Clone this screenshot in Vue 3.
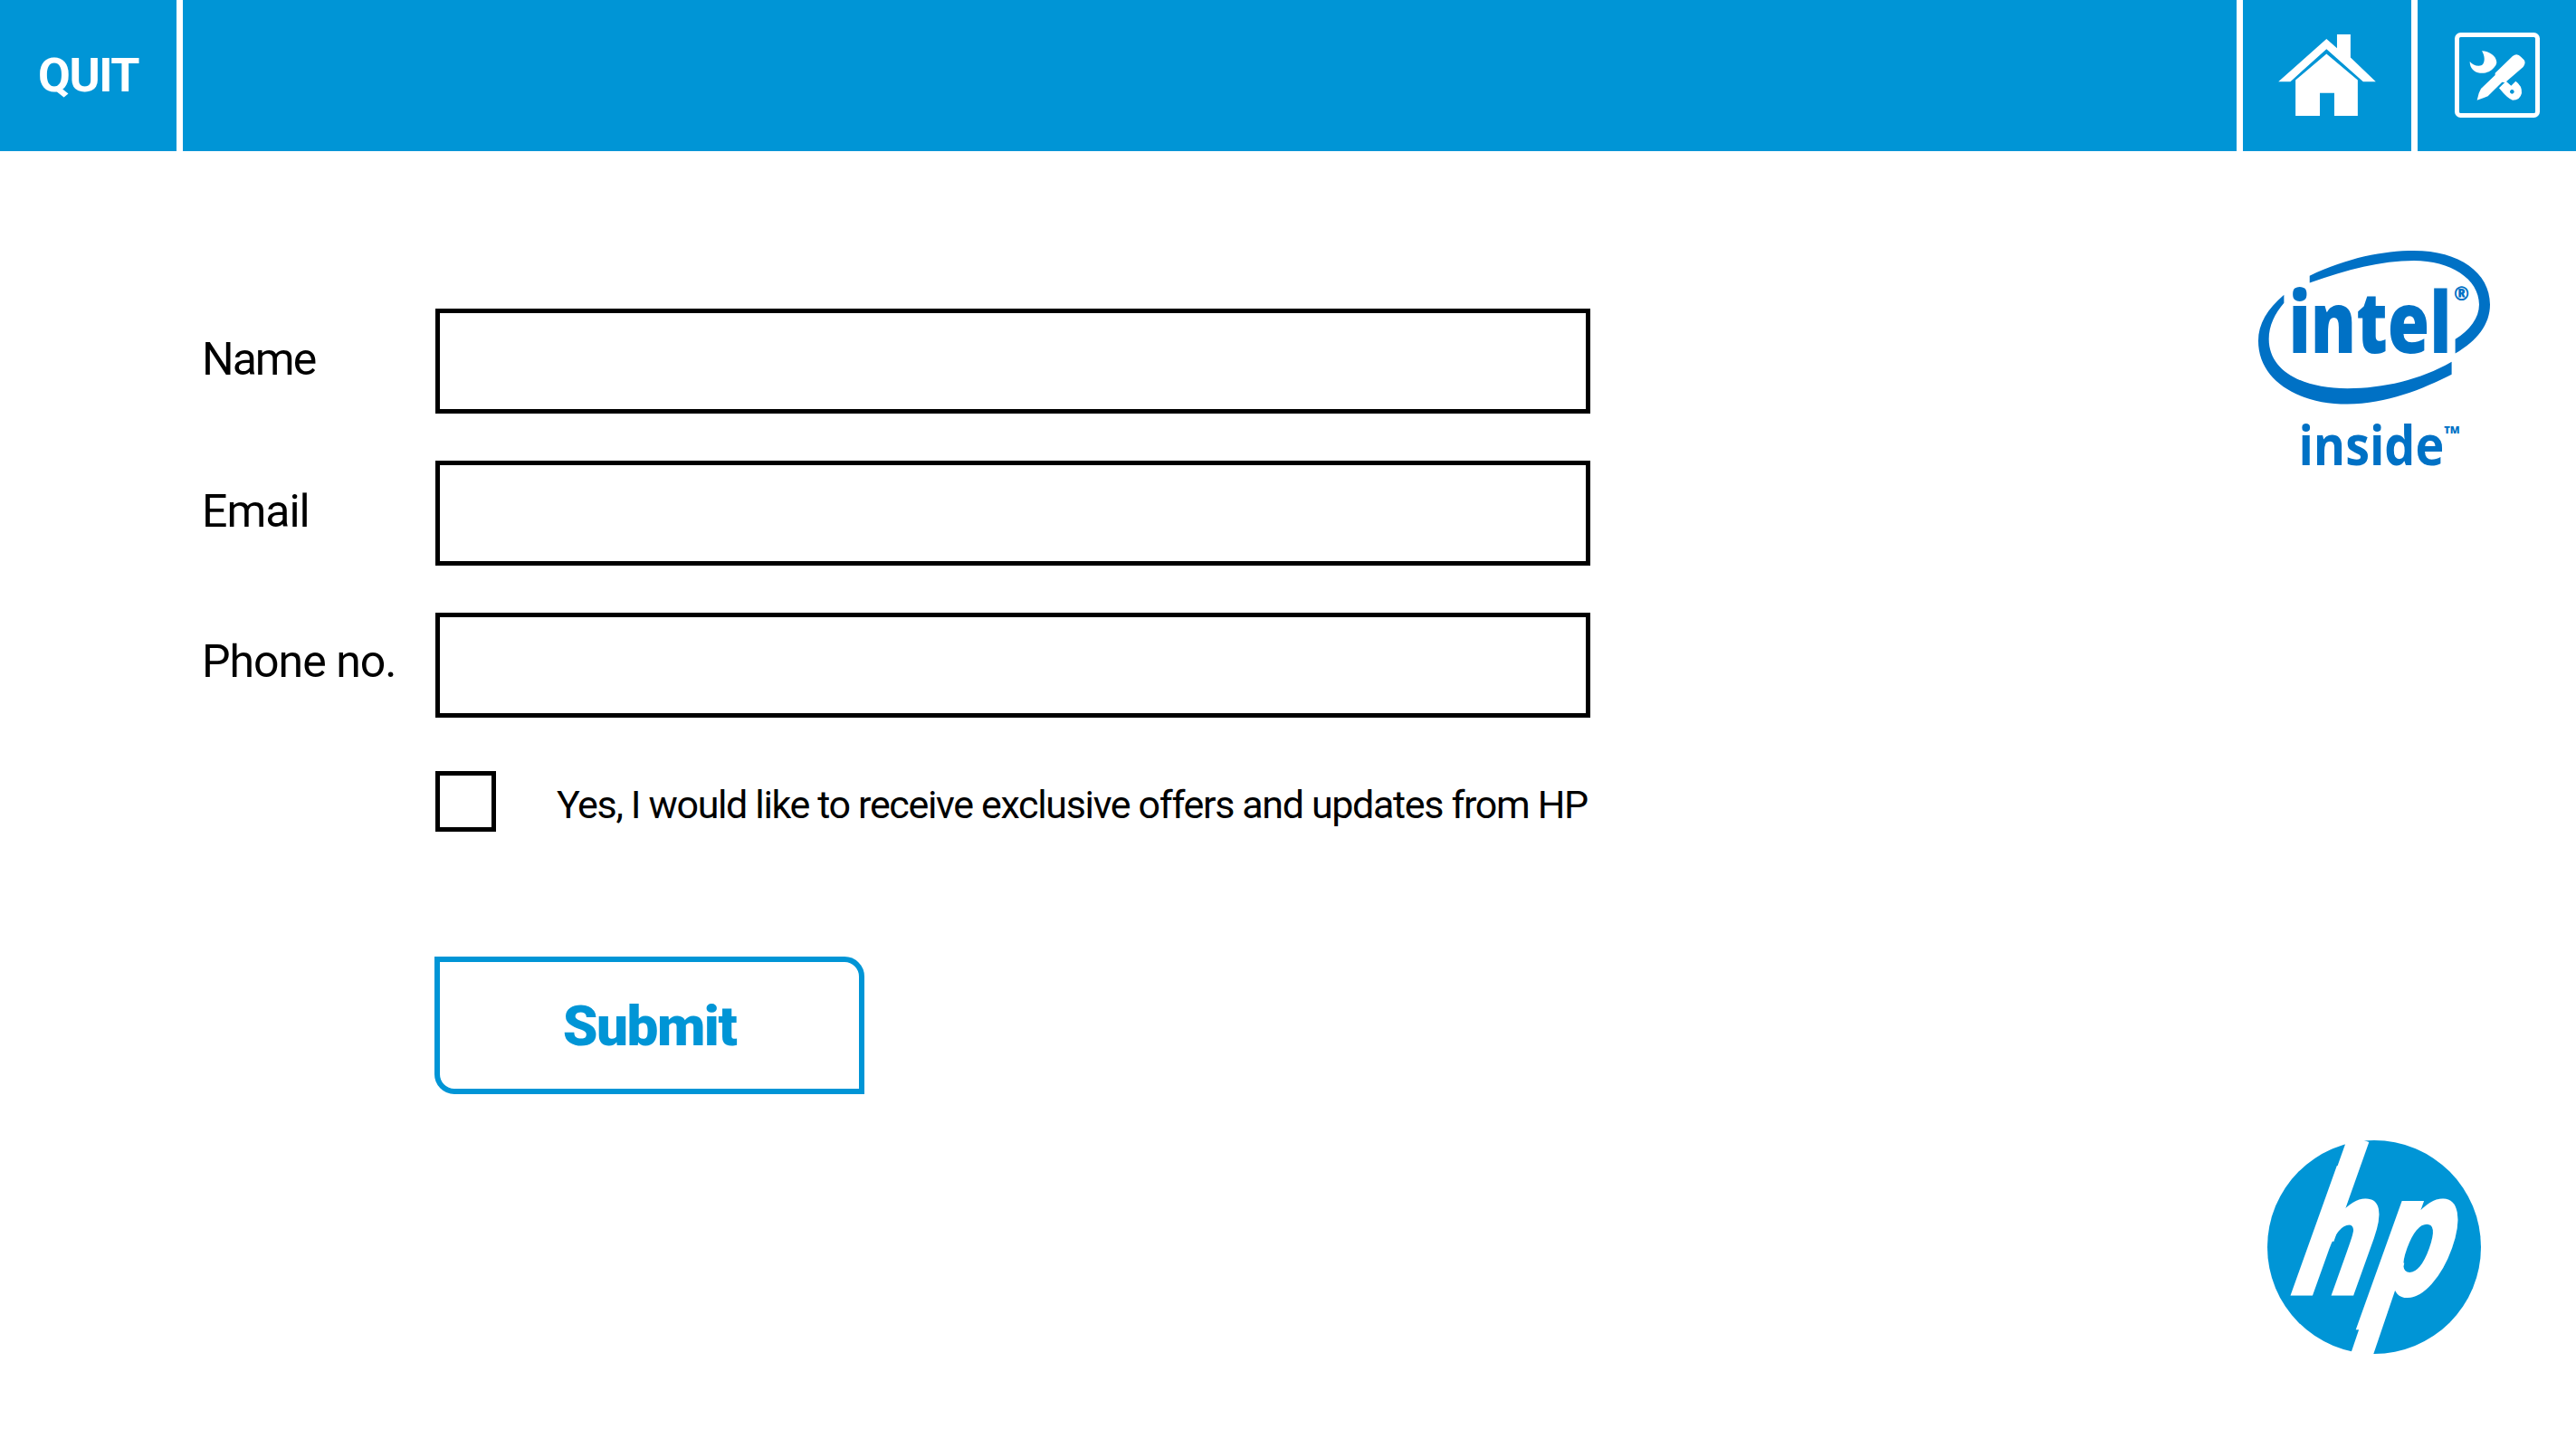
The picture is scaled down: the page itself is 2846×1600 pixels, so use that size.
<template>
  <div class="screen">
    <header class="topbar">
      <button class="cell quit">QUIT</button>
      <div class="cell spacer"></div>
      <button class="cell home" aria-label="Home">
        <svg width="108" height="90" viewBox="228 113 324 271" fill="#fff">
          <path d="M388 128 L423 159 L423 113 L468 113 L468 190 L552 270 L510 270 L388 162 L268 270 L228 270 Z" />
          <path d="M388 178 L492 265 L492 384 L414 384 L414 308 L366 308 L366 384 L285 384 L285 265 Z" />
        </svg>
      </button>
      <button class="cell tools" aria-label="Tools">
        <svg width="94" height="94" viewBox="0 0 94 94">
          <rect x="2.5" y="2.5" width="89" height="89" rx="4" fill="none" stroke="#fff" stroke-width="5" />
          <g fill="#fff" transform="translate(14 12) scale(0.3333)">
            <path d="M48 25 C72 25 96 42 97 62 C97 70 92 76 88 80 C78 92 62 100 42 98 C22 96 8 82 8 60 C18 72 35 78 48 72 C60 64 58 40 48 25 Z" />
            <path d="M150 42 Q165 30 178 45 L188 55 Q195 65 185 78 L125 130 L115 128 L68 175 L55 180 L32 188 L38 165 L45 150 L92 105 L92 98 Z" />
            <path fill-rule="evenodd" d="M105 148 L128 125 L145 140 L160 125 Q182 140 180 165 Q175 188 150 188 Q135 185 105 148 Z M148 153 a7 7 0 1 0 0.1 0 Z" />
          </g>
        </svg>
      </button>
    </header>

    <main class="content">
      <form class="signup" @submit.prevent>
        <div class="fields">
          <template v-for="field in fields" :key="field.id">
            <label class="field-label" :class="field.id" :for="field.id">{{ field.label }}</label>
            <input :id="field.id" v-model="field.value" class="field-input" type="text" />
          </template>
        </div>

        <div class="consent">
          <input id="offers" v-model="offers" class="checkbox" type="checkbox" />
          <label for="offers">Yes, I would like to receive exclusive offers and updates from HP</label>
        </div>

        <button class="submit" type="submit">Submit</button>
      </form>

      <aside class="logos">
        <svg class="intel" width="256" height="238" viewBox="105 52 767 713">
          <g fill="#0071c5">
            <path d="M275 135 C400 75 520 52 620 52 C770 52 872 125 872 230 C872 295 830 350 757 392 L757 345 C805 315 836 275 836 230 C836 145 740 85 620 85 C510 85 400 115 275 158 Z" />
            <path d="M190 198 C135 245 105 295 105 350 C105 480 235 560 400 560 C530 560 650 510 745 462 L745 420 C640 480 520 508 400 508 C250 508 140 450 140 345 C140 300 160 260 190 225 Z" />
            <text x="205" y="390" font-size="283" textLength="540" lengthAdjust="spacingAndGlyphs">intel</text>
            <text x="752" y="216" font-size="62">®</text>
            <text class="inside" x="238" y="762" font-size="182" textLength="482" lengthAdjust="spacingAndGlyphs">inside</text>
            <text x="720" y="656" font-size="32" textLength="52" lengthAdjust="spacingAndGlyphs">TM</text>
          </g>
        </svg>

        <svg class="hp" width="236" height="236" viewBox="0 0 236 236">
          <circle cx="118" cy="118" r="118" fill="#0095d6" />
          <g stroke="#fff" stroke-width="24">
            <line x1="101" y1="-2" x2="62" y2="108" />
            <line x1="104" y1="238" x2="140" y2="132" />
          </g>
          <text transform="translate(0 169) skewX(-19.7)" x="18" font-size="182" fill="#fff" stroke="#fff" stroke-width="5" textLength="172" lengthAdjust="spacingAndGlyphs">hp</text>
        </svg>
      </aside>
    </main>
  </div>
</template>

<script setup>
import { ref } from "vue";

const fields = ref([
  { id: "name", label: "Name", value: "" },
  { id: "email", label: "Email", value: "" },
  { id: "phone", label: "Phone no.", value: "" },
]);

const offers = ref(false);
</script>

<style>
html,
body {
  margin: 0;
  background: #fff;
}
</style>

<style scoped>
.screen {
  width: 2846px;
  height: 1600px;
  display: flex;
  flex-direction: column;
  font-family: "Roboto", "Liberation Sans", sans-serif;
  color: #000;
  overflow: hidden;
}

.topbar {
  height: 167px;
  display: flex;
  gap: 7px;
  flex-shrink: 0;
}

.cell {
  background: #0095d6;
  border: none;
  padding: 0 0 1px;
  display: flex;
  align-items: center;
  justify-content: center;
}

.quit {
  width: 195px;
  color: #fff;
  font-family: inherit;
  font-size: 52px;
  font-weight: 700;
  letter-spacing: -1.5px;
}

.spacer {
  flex: 1;
}

.home {
  width: 186px;
}

.tools {
  width: 175px;
}

.content {
  flex: 1;
  display: flex;
  justify-content: space-between;
}

.signup {
  padding: 174px 0 0 223px;
}

.fields {
  display: grid;
  grid-template-columns: 258px 1276px;
  row-gap: 52px;
  align-items: center;
}

.field-label {
  font-size: 50px;
  letter-spacing: -1px;
  padding-bottom: 4px;
}

.field-label.name {
  letter-spacing: -2px;
}

.field-label.phone {
  padding-bottom: 8px;
}

.field-input {
  width: 100%;
  height: 116px;
  box-sizing: border-box;
  border: 5px solid #000;
  border-radius: 0;
  outline: none;
  padding: 0 20px;
  font: inherit;
  font-size: 44px;
}

.consent {
  display: flex;
  align-items: center;
  gap: 67px;
  margin: 59px 0 0 258px;
  font-size: 43px;
  letter-spacing: -1.35px;
}

.consent label {
  padding-top: 6px;
}

.checkbox {
  appearance: none;
  width: 67px;
  height: 67px;
  margin: 0;
  border: 5px solid #000;
  background: #fff;
  flex-shrink: 0;
}

.submit {
  display: block;
  width: 475px;
  height: 152px;
  margin: 138px 0 0 257px;
  box-sizing: border-box;
  border: 6px solid #0095d6;
  border-radius: 0 22px 0 22px;
  background: #fff;
  color: #0095d6;
  font-family: inherit;
  font-size: 62px;
  font-weight: 900;
  letter-spacing: -1.5px;
}

.logos {
  width: 446px;
  display: flex;
  flex-direction: column;
  align-items: center;
  justify-content: space-between;
  padding: 110px 0 104px;
  box-sizing: border-box;
}

.intel,
.hp {
  overflow: visible;
}

.intel text {
  font-family: "Open Sans", sans-serif;
  font-weight: 800;
}

.intel .inside {
  font-weight: 700;
}

.hp text {
  font-family: "DejaVu Sans", sans-serif;
  font-weight: 700;
}
</style>
